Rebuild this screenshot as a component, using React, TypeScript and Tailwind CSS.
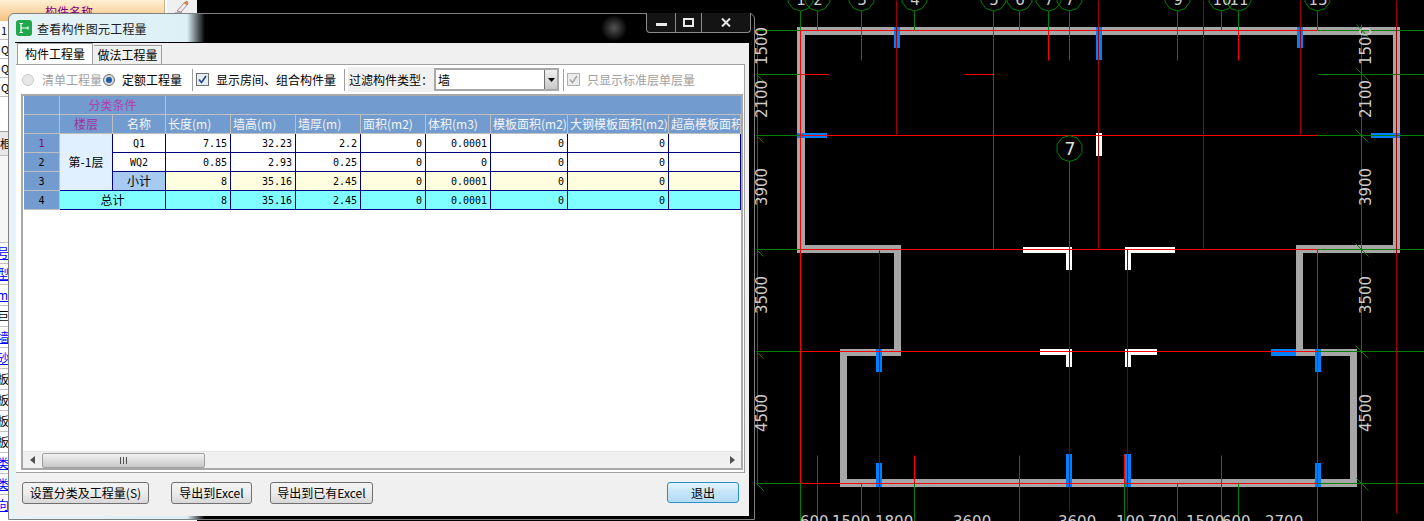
const FONT = "font-['Noto_Sans_CJK_SC','Liberation_Sans',sans-serif]";
const MONO = "font-['DejaVu_Sans_Mono','Noto_Sans_CJK_SC',monospace]";

const GREEN = '#008000';
const RED = '#ff0000';
const DARK = '#a00000';
const MAROON = '#800000';

// [x1, y1, x2, y2, colour]
const lines: [number, number, number, number, string][] = [
  // horizontals
  [800, 30, 1317, 30, RED],
  [1317, 30, 1424, 30, GREEN],
  [757, 30, 800, 30, GREEN],
  [757, 74, 800, 74, GREEN],
  [800, 74, 829, 74, RED],
  [964, 74, 993, 74, RED],
  [1318, 74, 1424, 74, GREEN],
  [757, 135, 800, 135, GREEN],
  [800, 135, 1317, 135, RED],
  [1317, 135, 1424, 135, GREEN],
  [757, 249, 800, 249, GREEN],
  [800, 249, 1317, 249, RED],
  [1317, 249, 1424, 249, GREEN],
  [757, 351, 800, 351, GREEN],
  [800, 351, 1317, 351, RED],
  [1317, 351, 1424, 351, GREEN],
  [757, 483, 800, 483, GREEN],
  [800, 483, 1317, 483, RED],
  [1317, 483, 1424, 483, GREEN],
  // verticals
  [757, 30, 757, 483, GREEN],
  [1361, 24, 1361, 521, GREEN],
  [800, 30, 800, 483, RED],
  [800, 483, 800, 521, GREEN],
  [896, 0, 896, 135, DARK],
  [861, 30, 861, 60, RED],
  [993, 30, 993, 249, RED],
  [1048, 30, 1048, 60, RED],
  [1069, 30, 1069, 60, RED],
  [1069, 161, 1069, 249, GREEN],
  [1069, 249, 1069, 511, MAROON],
  [1098, 0, 1098, 249, DARK],
  [1177, 30, 1177, 60, RED],
  [1203, 0, 1203, 249, DARK],
  [1238, 30, 1238, 60, RED],
  [1300, 0, 1300, 135, DARK],
  [1396, 0, 1396, 513, DARK],
  [1317, 249, 1317, 483, RED],
  [1317, 483, 1317, 521, GREEN],
  [1127, 249, 1127, 511, MAROON],
  [879, 250, 879, 513, MAROON],
  [817, 455, 817, 483, RED],
  [914, 455, 914, 483, RED],
  [1019, 455, 1019, 483, RED],
  [1124, 454, 1124, 483, RED],
  [1221, 455, 1221, 483, RED],
  [817, 483, 817, 521, GREEN],
  [861, 483, 861, 521, GREEN],
  [914, 483, 914, 521, GREEN],
  [1019, 483, 1019, 521, GREEN],
  [1124, 483, 1124, 521, GREEN],
  [1177, 483, 1177, 521, GREEN],
  [1221, 483, 1221, 521, GREEN],
  [1238, 483, 1238, 521, GREEN],
  // ticks
  [756, 74, 763, 81, GREEN],
  [756, 135, 763, 142, GREEN],
  [756, 249, 763, 256, GREEN],
  [756, 351, 763, 358, GREEN],
  [756, 483, 763, 490, GREEN],
  [1356, 24, 1368, 37, GREEN],
  [1356, 68, 1368, 80, GREEN],
  [1355, 129, 1368, 142, GREEN],
  [1355, 243, 1368, 256, GREEN],
  [1355, 345, 1368, 358, GREEN],
  [1356, 478, 1368, 490, GREEN],
];

// [x, y, w, h]
const walls = [
  [797, 27, 603, 8],
  [797, 27, 8, 226],
  [1393, 27, 7, 226],
  [797, 245, 104, 8],
  [894, 245, 7, 111],
  [840, 349, 61, 7],
  [840, 349, 7, 138],
  [840, 479, 517, 8],
  [1350, 349, 7, 138],
  [1296, 349, 61, 7],
  [1296, 245, 7, 111],
  [1296, 245, 104, 8],
];

const blue = [
  [894, 27, 6, 21],
  [797, 133, 30, 5],
  [1096, 27, 6, 33],
  [1297, 27, 6, 21],
  [1371, 133, 29, 5],
  [876, 349, 6, 23],
  [876, 463, 6, 24],
  [1066, 454, 6, 33],
  [1124, 454, 7, 33],
  [1271, 349, 25, 7],
  [1315, 349, 6, 23],
  [1315, 463, 6, 24],
];

const white = [
  [1096, 133, 6, 23],
  [1023, 247, 49, 6],
  [1066, 247, 6, 23],
  [1125, 247, 50, 6],
  [1125, 247, 6, 23],
  [1040, 349, 32, 6],
  [1066, 349, 6, 18],
  [1125, 349, 32, 6],
  [1125, 349, 6, 18],
];

const balloons: [number, string][] = [
  [800, '1'], [817, '2'], [861, '3'], [914, '4'], [993, '5'], [1019, '6'],
  [1048, '7'], [1069, '7'], [1177, '9'], [1221, '10'], [1238, '11'], [1317, '13'],
];

const sideDims: [number, string][] = [
  [46, '1500'], [99, '2100'], [187, '3900'], [295, '3500'], [413, '4500'],
];

const bottomDims: [number, string][] = [
  [800, '600'], [832, '1500'], [875, '1800'], [953, '3600'], [1058, '3600'],
  [1116, '100'], [1148, '700'], [1186, '1500'], [1222, '600'], [1265, '2700'],
];

function heptagon(cx: number, cy: number, r: number) {
  const pts: string[] = [];
  for (let i = 0; i < 10; i++) {
    const a = (i / 10) * Math.PI * 2 + Math.PI / 2;
    pts.push(`${(cx + r * Math.cos(a)).toFixed(1)},${(cy + r * Math.sin(a)).toFixed(1)}`);
  }
  return pts.join(' ');
}

function CadDrawing() {
  return (
    <svg viewBox="197 0 1227 521" width={1227} height={521} className="shrink-0 bg-black" fontFamily="'DejaVu Sans',sans-serif">
      {walls.map(([x, y, w, h], i) => <rect key={i} x={x} y={y} width={w} height={h} fill="#a6a6a6" />)}
      {blue.map(([x, y, w, h], i) => <rect key={i} x={x} y={y} width={w} height={h} fill="#0080ff" />)}
      {white.map(([x, y, w, h], i) => <rect key={i} x={x} y={y} width={w} height={h} fill="#fff" />)}
      {lines.map(([x1, y1, x2, y2, c], i) => (
        <line key={i} x1={x1 + 0.5} y1={y1 + 0.5} x2={x2 + 0.5} y2={y2 + 0.5} stroke={c} strokeWidth={1} />
      ))}
      {balloons.map(([x, label]) => (
        <g key={x + label}>
          <polygon points={heptagon(x + 0.5, -2, 13)} fill="none" stroke={GREEN} />
          <line x1={x + 0.5} y1={11} x2={x + 0.5} y2={30} stroke={GREEN} />
          <text x={x + 1} y={5} fontSize={15} fill="#ccc" textAnchor="middle">{label}</text>
        </g>
      ))}
      <polygon points={heptagon(1069.5, 148.5, 13)} fill="none" stroke={GREEN} />
      <text x={1070} y={155} fontSize={18} fill="#ddd" textAnchor="middle">7</text>
      {sideDims.map(([y, label]) => (
        <g key={label} fill="#ccc" fontSize={15} textAnchor="middle">
          <text transform={`translate(767 ${y}) rotate(-90)`}>{label}</text>
          <text transform={`translate(1371 ${y}) rotate(-90)`}>{label}</text>
        </g>
      ))}
      {bottomDims.map(([x, label]) => (
        <text key={x} x={x} y={527} fontSize={15} fill="#ccc">{label}</text>
      ))}
    </svg>
  );
}

const leftRows: [string, boolean][] = [
  ['号', true], ['型', true], ['mm', true], ['巨龙', false], ['墙', true], ['砂', true],
  ['板', false], ['板', false], ['板', false], ['板', false], ['类型', true], ['类型', true], ['向', true],
];

// the app that sits behind the dialog, only an 8px strip and the top edge show
function BackApp() {
  return (
    <div className={`w-[197px] h-[521px] shrink-0 overflow-hidden bg-white ${FONT}`}>
      <div className="flex h-[21px]">
        <div className="w-[165px] pl-[45px] bg-gradient-to-b from-[#fff0d4] to-[#f6c27c] border-r border-[#c8b48c] text-[12px] leading-[24px] text-[#800080]">构件名称</div>
        <div className="flex-1 bg-[#f0f0f0] border-l-2 border-white flex justify-center">
          <svg width="18" height="14" viewBox="0 0 18 14">
            <path d="M4 11 L11 3 L14 1 L15 4 L8 12 Z" fill="#f4ece4" stroke="#806080" strokeWidth="0.7" />
            <path d="M11 3 L14 1 L15 4 L13 5 Z" fill="#e87830" />
            <path d="M2 13 H9" stroke="#707070" strokeWidth="1" />
          </svg>
        </div>
      </div>
      {['1', 'Q', 'Q2', 'Q2'].map((t, i) => (
        <div key={i} className="h-[19px] border-b border-[#c0c0c0] text-[11px] leading-[18px] pl-px">{t}</div>
      ))}
      <div className="h-[35px] border-b border-[#a0a0a0]" />
      <div className="h-[24px] bg-[#e8e8e8] border-b border-[#c0c0c0] text-[12px] leading-[24px]">框</div>
      <div className="h-[86px] bg-[#f6f6f6]" />
      {leftRows.map(([t, isLink], i) => (
        <div key={i} className={`h-[21px] border-t border-[#c0c0c0] text-[12px] leading-[20px] whitespace-nowrap -ml-[3px] ${isLink ? 'text-[#0000ff] underline' : 'text-black'}`}>{t}</div>
      ))}
    </div>
  );
}

const COLS = 'grid-cols-[36px_53px_53px_65px_65px_65px_65px_65px_77px_101px_72px]';
const HEAD_CELL = 'bg-[#729ccf] border-r border-b border-[#c0c0c0] flex items-center';
const HEADERS = ['长度(m)', '墙高(m)', '墙厚(m)', '面积(m2)', '体积(m3)', '模板面积(m2)', '大钢模板面积(m2)', '超高模板面积(m2)'];

function Num({ v, bg }: { v: string; bg: string }) {
  return (
    <div className={`${bg} border-r border-b border-[#000080] flex items-center justify-end pr-[3px] text-[10px] ${MONO} text-black`}>{v}</div>
  );
}

function RowHead({ n, purple }: { n: string; purple?: boolean }) {
  return (
    <div className={`bg-[#729ccf] border-r border-b border-[#c0c0c0] flex items-center justify-center text-[10px] ${MONO} ${purple ? 'text-[#800080]' : 'text-black'}`}>{n}</div>
  );
}

function Row({ values, bg }: { values: string[]; bg: string }) {
  return (
    <>
      {values.map((v, i) => <Num key={i} v={v} bg={bg} />)}
    </>
  );
}

function DataGrid() {
  return (
    <div className={`grid ${COLS} auto-rows-[19px] ml-px text-[12px] w-[717px] overflow-hidden`}>
      <div className={HEAD_CELL} />
      <div className={`${HEAD_CELL} col-span-2 justify-center text-[#b040b0]`}>分类条件</div>
      <div className="col-span-8 bg-[#729ccf] border-b border-[#c0c0c0]" />

      <div className={HEAD_CELL} />
      <div className={`${HEAD_CELL} justify-center text-[#a0309f]`}>楼层</div>
      <div className={`${HEAD_CELL} justify-center text-[#f4f4f4]`}>名称</div>
      {HEADERS.map((h) => (
        <div key={h} className={`${HEAD_CELL} pl-[2px] whitespace-nowrap overflow-hidden text-[#f4f4f4]`}>{h}</div>
      ))}

      <RowHead n="1" purple />
      <div className="row-span-3 bg-[#e0f0ff] border-r border-b border-[#000080] flex items-center justify-center text-black">第-1层</div>
      <div className={`bg-white border-r border-b border-[#000080] flex items-center justify-center text-[10px] ${MONO}`}>Q1</div>
      <Row bg="bg-white" values={['7.15', '32.23', '2.2', '0', '0.0001', '0', '0', '']} />

      <RowHead n="2" />
      <div className={`bg-white border-r border-b border-[#000080] flex items-center justify-center text-[10px] ${MONO}`}>WQ2</div>
      <Row bg="bg-white" values={['0.85', '2.93', '0.25', '0', '0', '0', '0', '']} />

      <RowHead n="3" />
      <div className="bg-[#a6caf0] border-r border-b border-[#000080] flex items-center justify-center text-black">小计</div>
      <Row bg="bg-[#ffffe0]" values={['8', '35.16', '2.45', '0', '0.0001', '0', '0', '']} />

      <RowHead n="4" />
      <div className="col-span-2 bg-[#7fffff] border-r border-b border-[#000080] flex items-center justify-center text-black">总计</div>
      <Row bg="bg-[#7fffff]" values={['8', '35.16', '2.45', '0', '0.0001', '0', '0', '']} />
    </div>
  );
}

function ScrollBar() {
  return (
    <div className="h-[17px] bg-[#f0f0f0] border-t border-[#e6e6e6] flex items-center">
      <div className="w-[19px] flex justify-center">
        <svg width="6" height="8" viewBox="0 0 6 8"><path d="M5 0 V8 L0 4 Z" fill="#505050" /></svg>
      </div>
      <div className="w-[163px] h-[15px] rounded-[2px] border border-[#a0a0a0] bg-gradient-to-b from-[#f2f2f2] to-[#c8c8c8] flex items-center justify-center">
        <svg width="9" height="7" viewBox="0 0 9 7"><path d="M1.5 0 V7 M4.5 0 V7 M7.5 0 V7" stroke="#505050" /></svg>
      </div>
      <div className="flex-1" />
      <div className="w-[19px] flex justify-center">
        <svg width="6" height="8" viewBox="0 0 6 8"><path d="M1 0 V8 L6 4 Z" fill="#505050" /></svg>
      </div>
    </div>
  );
}

function Check({ disabled }: { disabled?: boolean }) {
  return (
    <div className={`w-[13px] h-[13px] border ${disabled ? 'border-[#b0b0b0] bg-[#ececec]' : 'border-[#707070] bg-[#e4ecf4]'} flex items-center justify-center shrink-0`}>
      <svg width="9" height="9" viewBox="0 0 9 9">
        <path d="M1 4.5 L3.5 7.5 L8 1" fill="none" stroke={disabled ? '#a8a8a8' : '#20408c'} strokeWidth="1.6" />
      </svg>
    </div>
  );
}

function OptionsRow() {
  return (
    <div className="h-[29px] flex items-center text-[12px] pl-[6px] bg-white">
      <div className="w-[12px] h-[12px] rounded-full border border-[#c8c8c8] bg-[#e8e8e8] shrink-0" />
      <span className="ml-[8px] w-[61px] text-[#a0a0a0] whitespace-nowrap">清单工程量</span>
      <div className="w-[12px] h-[12px] rounded-full border border-[#707070] bg-[#d8d8d8] flex items-center justify-center shrink-0">
        <div className="w-[6px] h-[6px] rounded-full bg-[#1c5ea8]" />
      </div>
      <span className="ml-[7px] w-[62px] text-black whitespace-nowrap">定额工程量</span>
      <div className="ml-[8px] w-px h-[22px] bg-[#a0a0a0]" />
      <div className="ml-[3px]"><Check /></div>
      <span className="ml-[7px] w-[120px] text-black whitespace-nowrap">显示房间、组合构件量</span>
      <div className="ml-[8px] w-px h-[22px] bg-[#a0a0a0]" />
      <div className="ml-[3px] w-[86px] h-[25px] bg-[#f0f0f0] flex items-center pl-px text-black whitespace-nowrap">过滤构件类型：</div>
      <div className="w-[125px] h-[23px] border-2 border-[#a8a8a8] bg-white flex items-center justify-between">
        <span className="pl-[2px] text-black">墙</span>
        <div className="w-[13px] h-full border-l border-[#707070] bg-gradient-to-b from-[#f0f0f0] to-[#c8c8c8] flex items-center justify-center">
          <svg width="7" height="4" viewBox="0 0 7 4"><path d="M0 0 H7 L3.5 4 Z" fill="#000" /></svg>
        </div>
      </div>
      <div className="ml-[4px] w-px h-[22px] bg-[#a0a0a0]" />
      <div className="ml-[3px]"><Check disabled /></div>
      <span className="ml-[7px] text-[#a0a0a0] whitespace-nowrap">只显示标准层单层量</span>
    </div>
  );
}

function Btn({ children, className }: { children: React.ReactNode; className: string }) {
  return (
    <div className={`h-[22px] rounded-[3px] border border-[#707070] bg-gradient-to-b from-[#f4f4f4] via-[#ececec] to-[#d8d8d8] flex items-center justify-center text-[12px] text-black whitespace-nowrap ${className}`}>{children}</div>
  );
}

function Dialog() {
  return (
    <div className={`absolute left-[8px] top-[13px] w-[747px] h-[507px] rounded-t-[6px] border border-[#808080] bg-[linear-gradient(90deg,#e6f3f7_0,#dcf0f6_178px,#000_196px)] ${FONT}`}>
      {/* title bar */}
      <div className="h-[28px] relative">
        <div className="absolute left-[7px] top-[6px] w-[16px] h-[16px] rounded-[3px] bg-[#1fa84e] flex items-center justify-center">
          <svg width="12" height="12" viewBox="0 0 12 12"><path d="M3 1.5 V10.5 M1.5 1.5 H5 M1.5 10.5 H5 M3 6 H10 M10 4.5 V7.5" stroke="#fff" strokeWidth="1.2" fill="none" /></svg>
        </div>
        <div className="absolute left-[28px] top-[6px] text-[12px] leading-[17px] tracking-[0.2px] text-[#202020] whitespace-nowrap">查看构件图元工程量</div>
        <div className="absolute right-[3px] -top-px h-[20px] flex border border-t-0 border-[#8c8c8c] rounded-b-[4px] bg-[#141414]">
          <div className="w-[29px] flex items-center justify-center border-r border-[#8c8c8c]"><div className="w-[11px] h-[3px] mt-[4px] bg-[#e8e8e8]" /></div>
          <div className="w-[26px] flex items-center justify-center border-r border-[#8c8c8c]"><div className="w-[11px] h-[9px] border-2 border-[#e8e8e8]" /></div>
          <div className="w-[48px] flex items-center justify-center">
            <svg width="10" height="9" viewBox="0 0 10 9"><path d="M1 0.5 L9 8.5 M9 0.5 L1 8.5" stroke="#e8e8e8" strokeWidth="2" /></svg>
          </div>
        </div>
        <div className="absolute left-[590px] top-[0px] w-[30px] h-[28px] rounded-full bg-[radial-gradient(circle,#555_0,transparent_65%)]" />
      </div>

      {/* client area */}
      <div className="ml-[6px] w-[734px] h-[474px] bg-[#f0f0f0] border-t border-black flex flex-col">
        <div className="h-[21px] flex items-end pl-[2px]">
          <div className="w-[76px] h-[21px] bg-white border border-b-0 border-[#a0a0a0] text-center text-[12px] leading-[20px] text-black">构件工程量</div>
          <div className="w-[68px] h-[19px] ml-px bg-[#f0f0f0] border-t border-r border-[#a0a0a0] text-center text-[12px] leading-[18px] text-black">做法工程量</div>
        </div>
        <div className="ml-px w-[729px] h-[409px] bg-white border-t border-r border-b border-[#a0a0a0] flex flex-col">
          <OptionsRow />
          <div className="ml-[5px] w-[722px] h-[376px] border-[2px] border-[#a8a8a8] flex flex-col">
            <div className="flex-1 bg-white"><DataGrid /></div>
            <ScrollBar />
          </div>
        </div>
        <div className="flex-1 flex items-start pt-[9px] pl-[7px]">
          <Btn className="w-[127px]">设置分类及工程量(S)</Btn>
          <Btn className="w-[81px] ml-[22px]">导出到Excel</Btn>
          <Btn className="w-[103px] ml-[18px]">导出到已有Excel</Btn>
          <div className="w-[72px] h-[21px] ml-[294px] rounded-[3px] border border-[#2a8fc8] bg-gradient-to-b from-[#e4f4fd] via-[#c4e4f8] to-[#b4dcf6] flex items-center justify-center text-[12px] text-black">退出</div>
        </div>
      </div>
    </div>
  );
}

export default function App() {
  return (
    <div className="relative w-[1424px] h-[521px] overflow-hidden bg-black flex">
      <BackApp />
      <CadDrawing />
      <Dialog />
    </div>
  );
}
